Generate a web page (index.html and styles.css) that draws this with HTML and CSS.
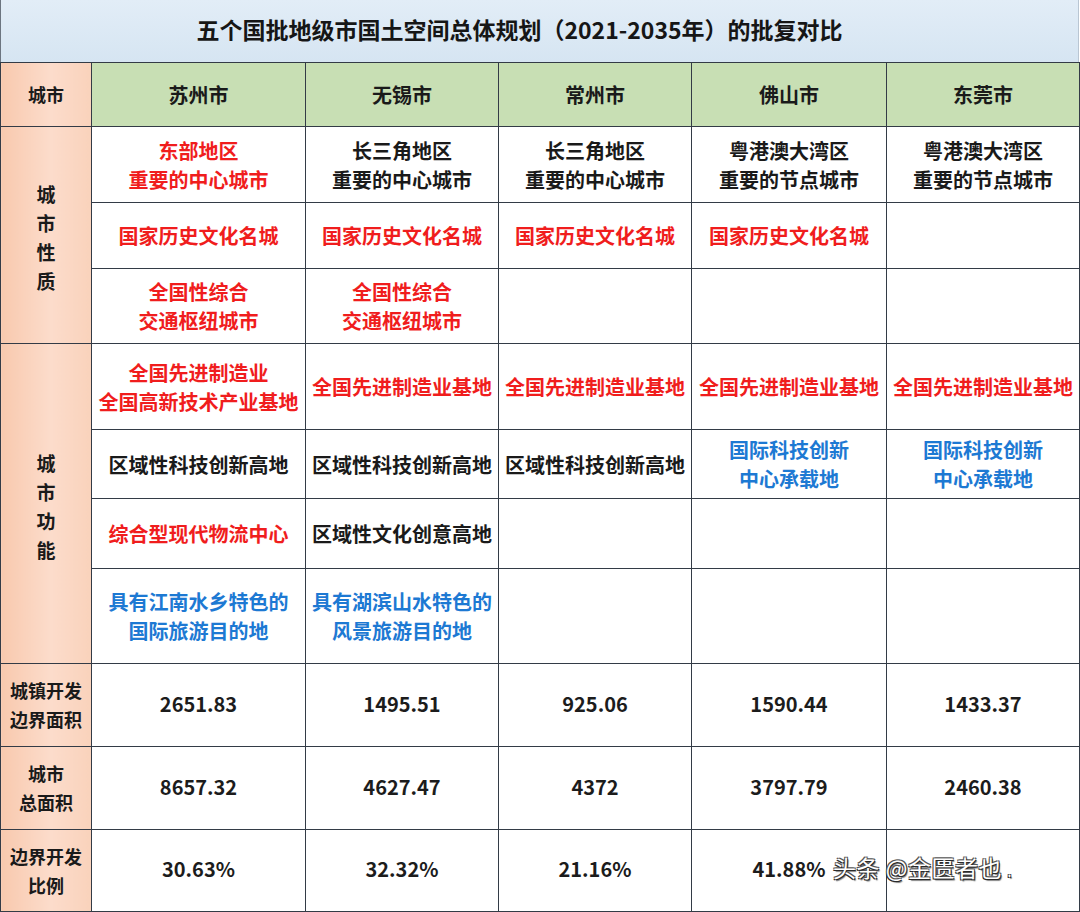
FILE: index.html
```html
<!DOCTYPE html>
<html lang="zh">
<head>
<meta charset="utf-8">
<link rel="stylesheet" href="styles.css">
</head>
<body>
<div class="page">
  <div class="title">五个国批地级市国土空间总体规划（2021-2035年）的批复对比</div>
  <table class="grid">
    <colgroup>
      <col class="c0"><col class="c1"><col class="c2"><col class="c3"><col class="c4"><col class="c5">
    </colgroup>
    <tr class="h-head">
      <th class="lab lab-s">城市</th>
      <th class="city">苏州市</th>
      <th class="city">无锡市</th>
      <th class="city">常州市</th>
      <th class="city">佛山市</th>
      <th class="city">东莞市</th>
    </tr>
    <tr class="h-r1">
      <td class="lab vert" rowspan="3">城<br>市<br>性<br>质</td>
      <td class="red">东部地区<br>重要的中心城市</td>
      <td>长三角地区<br>重要的中心城市</td>
      <td>长三角地区<br>重要的中心城市</td>
      <td>粤港澳大湾区<br>重要的节点城市</td>
      <td>粤港澳大湾区<br>重要的节点城市</td>
    </tr>
    <tr class="h-r2">
      <td class="red">国家历史文化名城</td>
      <td class="red">国家历史文化名城</td>
      <td class="red">国家历史文化名城</td>
      <td class="red">国家历史文化名城</td>
      <td></td>
    </tr>
    <tr class="h-r3">
      <td class="red">全国性综合<br>交通枢纽城市</td>
      <td class="red">全国性综合<br>交通枢纽城市</td>
      <td></td>
      <td></td>
      <td></td>
    </tr>
    <tr class="h-f1">
      <td class="lab vert" rowspan="4">城<br>市<br>功<br>能</td>
      <td class="red">全国先进制造业<br>全国高新技术产业基地</td>
      <td class="red">全国先进制造业基地</td>
      <td class="red">全国先进制造业基地</td>
      <td class="red">全国先进制造业基地</td>
      <td class="red">全国先进制造业基地</td>
    </tr>
    <tr class="h-f2">
      <td>区域性科技创新高地</td>
      <td>区域性科技创新高地</td>
      <td>区域性科技创新高地</td>
      <td class="blue">国际科技创新<br>中心承载地</td>
      <td class="blue">国际科技创新<br>中心承载地</td>
    </tr>
    <tr class="h-f3">
      <td class="red">综合型现代物流中心</td>
      <td>区域性文化创意高地</td>
      <td></td>
      <td></td>
      <td></td>
    </tr>
    <tr class="h-f4">
      <td class="blue">具有江南水乡特色的<br>国际旅游目的地</td>
      <td class="blue">具有湖滨山水特色的<br>风景旅游目的地</td>
      <td></td>
      <td></td>
      <td></td>
    </tr>
    <tr class="h-n">
      <td class="lab lab-s">城镇开发<br>边界面积</td>
      <td class="num">2651.83</td>
      <td class="num">1495.51</td>
      <td class="num">925.06</td>
      <td class="num">1590.44</td>
      <td class="num">1433.37</td>
    </tr>
    <tr class="h-n">
      <td class="lab lab-s">城市<br>总面积</td>
      <td class="num">8657.32</td>
      <td class="num">4627.47</td>
      <td class="num">4372</td>
      <td class="num">3797.79</td>
      <td class="num">2460.38</td>
    </tr>
    <tr class="h-n3">
      <td class="lab lab-s">边界开发<br>比例</td>
      <td class="num">30.63%</td>
      <td class="num">32.32%</td>
      <td class="num">21.16%</td>
      <td class="num">41.88%</td>
      <td class="num"></td>
    </tr>
  </table>
  <div class="watermark">头条 @金匮者也 <span class="dot">.</span></div>
</div>
</body>
</html>
```

FILE: styles.css
```css
html, body {
  margin: 0;
  padding: 0;
  background: #ffffff;
}

body {
  font-family: "Noto Sans CJK SC", "Noto Sans", sans-serif;
  color: #1a1a1a;
}

.page {
  position: relative;
  width: 1080px;
  height: 912px;
  overflow: hidden;
}

.title {
  height: 62px;
  box-sizing: border-box;
  border-left: 1px solid #6c7580;
  border-right: 1px solid #b9c6d3;
  width: 1079px;
  background: linear-gradient(to bottom, #e2edf7, #d6e5f2);
  display: flex;
  align-items: center;
  justify-content: center;
  font-size: 23px;
  font-weight: 700;
  color: #161616;
  padding: 0 40px 5px 0;
}

.grid {
  border-collapse: collapse;
  table-layout: fixed;
  width: 1079px;
  margin: 0;
}

.c0 { width: 91px; }
.c1 { width: 214px; }
.c2 { width: 193px; }
.c3 { width: 193px; }
.c4 { width: 195px; }
.c5 { width: 193px; }

.grid th,
.grid td {
  border: 1.5px solid #333b46;
  padding: 0;
  text-align: center;
  vertical-align: middle;
  font-size: 20px;
  line-height: 29px;
  font-weight: 700;
  color: #1a1a1a;
  background: #ffffff;
  white-space: nowrap;
}

.grid .city {
  background: #c8dfb4;
  font-size: 20px;
}

.grid .lab {
  background: linear-gradient(to right, #f8c9ae, #fcdccb 55%, #f9d2bb);
  font-size: 18px;
  line-height: 29px;
}

.grid .lab-s {
  font-size: 18px;
}

.grid .vert {
  font-size: 19px;
  line-height: 29px;
  padding-top: 4px;
}

.grid .red {
  color: #f01d1d;
}

.grid .blue {
  color: #1d79d3;
}

.grid .num {
  font-size: 20px;
  color: #1c1c1c;
  padding-bottom: 4px;
}

.h-head { height: 64px; }
.h-r1 { height: 76px; }
.h-r2 { height: 66px; }
.h-r3 { height: 75px; }
.h-f1 { height: 86px; }
.h-f2 { height: 69px; }
.h-f3 { height: 70px; }
.h-f4 { height: 95px; }
.h-n { height: 83px; }
.h-n3 { height: 82px; }

.watermark {
  position: absolute;
  left: 833px;
  top: 851px;
  font-size: 23px;
  line-height: 32px;
  font-weight: 400;
  color: #ffffff;
  letter-spacing: 0.5px;
  white-space: nowrap;
  text-shadow:
    1px 1px 0 #2a2a2a,
    -1px -1px 0 #555,
    1px -1px 0 #555,
    -1px 1px 0 #2a2a2a,
    1.5px 1.5px 1px rgba(0,0,0,0.5);
}

.watermark .dot {
  font-size: 14px;
}
```
